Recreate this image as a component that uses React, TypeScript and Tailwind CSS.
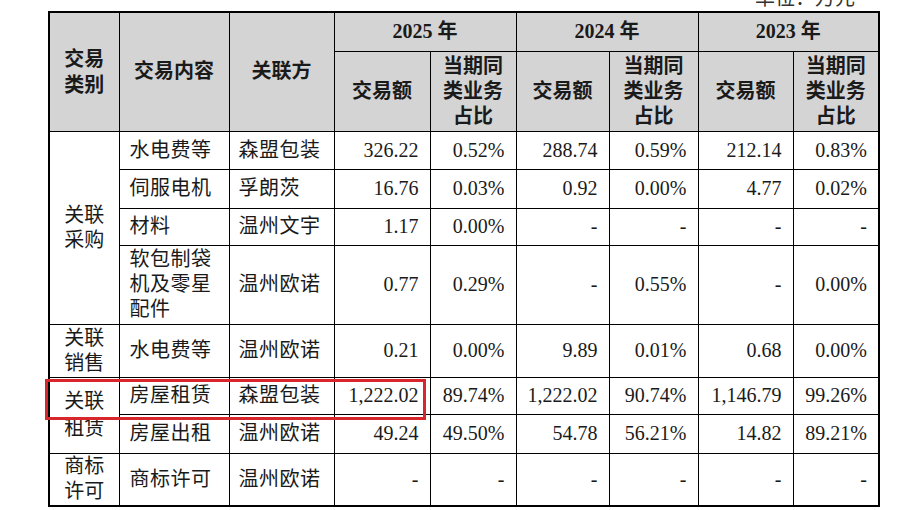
const cell = "border-[1.5px] border-black";
const font = { fontFamily: '"Liberation Serif", "Noto Sans CJK SC", serif' };

type Row = {
  group?: { label: string[]; span: number };
  item: string[];
  party: string;
  values: string[];
  h: string;
};

const rows: Row[] = [
  {
    group: { label: ["关联", "采购"], span: 4 },
    item: ["水电费等"],
    party: "森盟包装",
    values: ["326.22", "0.52%", "288.74", "0.59%", "212.14", "0.83%"],
    h: "h-[38px]",
  },
  {
    item: ["伺服电机"],
    party: "孚朗茨",
    values: ["16.76", "0.03%", "0.92", "0.00%", "4.77", "0.02%"],
    h: "h-[39px]",
  },
  {
    item: ["材料"],
    party: "温州文宇",
    values: ["1.17", "0.00%", "-", "-", "-", "-"],
    h: "h-[37px]",
  },
  {
    item: ["软包制袋", "机及零星", "配件"],
    party: "温州欧诺",
    values: ["0.77", "0.29%", "-", "0.55%", "-", "0.00%"],
    h: "h-[79px]",
  },
  {
    group: { label: ["关联", "销售"], span: 1 },
    item: ["水电费等"],
    party: "温州欧诺",
    values: ["0.21", "0.00%", "9.89", "0.01%", "0.68", "0.00%"],
    h: "h-[53px]",
  },
  {
    group: { label: ["关联", "租赁"], span: 2 },
    item: ["房屋租赁"],
    party: "森盟包装",
    values: ["1,222.02", "89.74%", "1,222.02", "90.74%", "1,146.79", "99.26%"],
    h: "h-[37px]",
  },
  {
    item: ["房屋出租"],
    party: "温州欧诺",
    values: ["49.24", "49.50%", "54.78", "56.21%", "14.82", "89.21%"],
    h: "h-[39px]",
  },
  {
    group: { label: ["商标", "许可"], span: 1 },
    item: ["商标许可"],
    party: "温州欧诺",
    values: ["-", "-", "-", "-", "-", "-"],
    h: "h-[53px]",
  },
];

export default function App() {
  return (
    <div
      className="relative w-[900px] h-[510px] bg-white overflow-hidden text-[#1a1a1a]"
      style={font}
    >
      {/* unit note, cut off by the top edge */}
      <div className="h-[11px] flex justify-end items-end pr-[45px]">
        <span className="text-[20px] leading-[20px] mb-[3px] text-[#333]">
          单位：万元
        </span>
      </div>

      <table className="ml-[48px] w-[830px] table-fixed border-collapse border-2 border-black text-[20px] leading-[25px]">
        <colgroup>
          <col className="w-[70px]" />
          <col className="w-[110px]" />
          <col className="w-[105px]" />
          <col className="w-[96px]" />
          <col className="w-[86px]" />
          <col className="w-[93px]" />
          <col className="w-[89px]" />
          <col className="w-[95px]" />
          <col className="w-[86px]" />
        </colgroup>
        <thead className="bg-[#d4d4d4] font-bold">
          <tr className="h-[39px]">
            <th rowSpan={2} className={`${cell} text-center leading-[26px]`}>
              交易
              <br />
              类别
            </th>
            <th rowSpan={2} className={`${cell} text-center`}>
              交易内容
            </th>
            <th rowSpan={2} className={`${cell} text-center`}>
              关联方
            </th>
            {["2025", "2024", "2023"].map((y) => (
              <th key={y} colSpan={2} className={`${cell} text-center`}>
                {y} 年
              </th>
            ))}
          </tr>
          <tr className="h-[80px]">
            {[0, 1, 2].map((i) => (
              <>
                <th key={`a${i}`} className={`${cell} text-center`}>
                  交易额
                </th>
                <th key={`b${i}`} className={`${cell} text-center`}>
                  当期同
                  <br />
                  类业务
                  <br />
                  占比
                </th>
              </>
            ))}
          </tr>
        </thead>
        <tbody>
          {rows.map((r, i) => (
            <tr key={i} className={r.h}>
              {r.group && (
                <td
                  rowSpan={r.group.span}
                  className={`${cell} text-center ${
                    r.group.span === 2 ? "leading-[27px]" : "leading-[25px]"
                  }`}
                >
                  {r.group.label[0]}
                  <br />
                  {r.group.label[1]}
                </td>
              )}
              <td className={`${cell} px-[10px] tracking-[0.5px]`}>
                {r.item.map((t, k) => (
                  <div key={k}>{t}</div>
                ))}
              </td>
              <td className={`${cell} px-[9px] tracking-[0.5px]`}>{r.party}</td>
              {r.values.map((v, k) => (
                <td key={k} className={`${cell} text-right pr-[11px]`}>
                  {v}
                </td>
              ))}
            </tr>
          ))}
        </tbody>
      </table>

      {/* highlight over the 房屋租赁 row */}
      <div className="absolute left-[45px] top-[379px] w-[381px] h-[41px] border-[3px] border-[#d7262c] pointer-events-none" />
    </div>
  );
}
